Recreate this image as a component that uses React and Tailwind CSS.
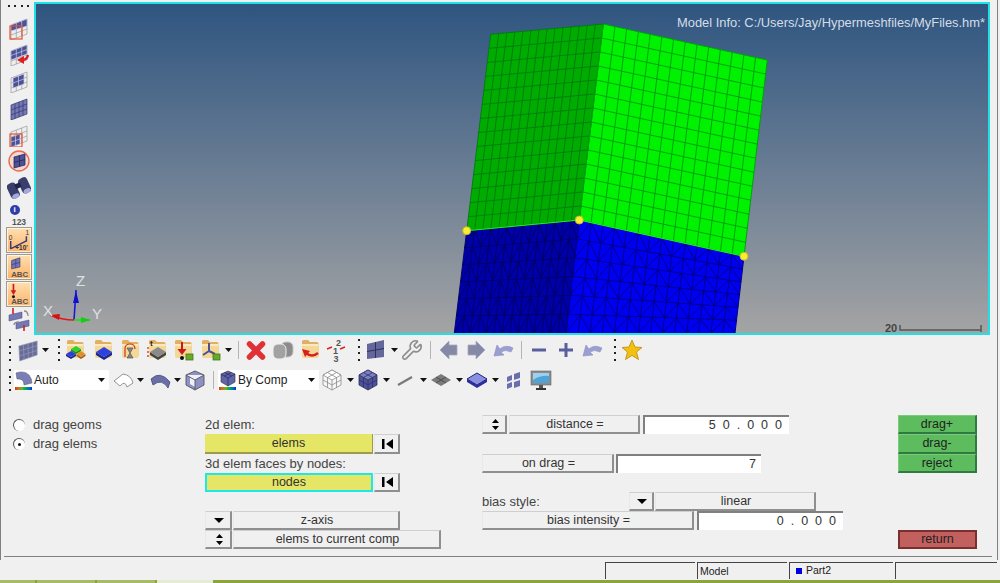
import React from 'react';
import { Wrench } from 'lucide-react';

const lerp = (a, b, t) => [a[0] + (b[0] - a[0]) * t, a[1] + (b[1] - a[1]) * t];
const pt = (q, u, v) => lerp(lerp(q[0], q[1], u), lerp(q[2], q[3], u), v);
const seg = (a, b) => `M${a[0].toFixed(1)} ${a[1].toFixed(1)}L${b[0].toFixed(1)} ${b[1].toFixed(1)}`;

const gridPath = (q, cols, rows) => {
  let d = '';
  for (let i = 0; i <= cols; i++) d += seg(pt(q, i / cols, 0), pt(q, i / cols, 1));
  for (let j = 0; j <= rows; j++) d += seg(pt(q, 0, j / rows), pt(q, 1, j / rows));
  return d;
};

const zigPath = (q, cols, rows) => {
  let d = gridPath(q, cols, rows);
  for (let i = 0; i < cols; i++) {
    for (let j = 0; j < rows; j++) {
      const [u0, u1, v0, v1] = [i / cols, (i + 1) / cols, j / rows, (j + 1) / rows];
      d += i % 2 ? seg(pt(q, u0, v0), pt(q, u1, v1)) : seg(pt(q, u1, v0), pt(q, u0, v1));
    }
  }
  return d;
};

const poly = (q) => [q[0], q[1], q[3], q[2]].map((p) => p.join(',')).join(' ');

const LT = [490.7, 34.3], CT = [603.3, 24], RT = [767.3, 60];
const LM = [466.7, 230.7], CM = [579.3, 220], RM = [744, 256.3];
const LB = [454.3, 333], CB = [566, 333], RB = [735, 333];
const faces = {
  greenL: [LT, CT, LM, CM],
  greenR: [CT, RT, CM, RM],
  blueL: [LM, CM, LB, CB],
  blueR: [CM, RM, CB, RB],
};

const Model = () => (
  <svg className="absolute inset-0 w-full h-full" viewBox="36 4 952 329">
    <polygon points={poly(faces.blueL)} fill="#0000aa" />
    <polygon points={poly(faces.blueR)} fill="#0000f0" />
    <path d={zigPath(faces.blueL, 14, 6)} stroke="#000060" strokeWidth="0.9" fill="none" />
    <path d={zigPath(faces.blueR, 14, 6)} stroke="#00008a" strokeWidth="1" fill="none" />
    <polygon points={poly(faces.greenL)} fill="#00ac00" />
    <polygon points={poly(faces.greenR)} fill="#00f200" />
    <path d={gridPath(faces.greenL, 14, 14)} stroke="#007a10" strokeWidth="0.9" fill="none" />
    <path d={gridPath(faces.greenR, 14, 14)} stroke="#00a010" strokeWidth="1" fill="none" />
    <path d={seg(LM, CM) + seg(CM, RM)} stroke="#20f020" strokeWidth="1" fill="none" />
    {[LM, CM, RM].map((p, i) => (
      <circle key={i} cx={p[0]} cy={p[1]} r="4" fill="#f6ee35" stroke="#c8b820" strokeWidth="1" />
    ))}
    <g strokeWidth="1.6" fill="none">
      <path d="M74 320L76 290" stroke="#1818e0" />
      <path d="M74 320L90 320" stroke="#18e018" />
      <path d="M74 320Q62 320 50 315" stroke="#e01818" />
    </g>
    <polygon points="76,291 79,303 73,303" fill="#1010d0" />
    <polygon points="91,320 81,317 81,323" fill="#10d010" />
    <polygon points="50,315 60,314 59,320" fill="#d81010" />
    <g fill="#dfe2e4" fontSize="15" fontFamily="Liberation Sans, sans-serif">
      <text x="76" y="286">Z</text>
      <text x="43" y="316">X</text>
      <text x="92" y="319">Y</text>
    </g>
    <text x="885" y="332" fill="#444" fontSize="11" fontWeight="bold" fontFamily="Liberation Sans, sans-serif">20</text>
    <path d="M900 325V330H981M981 325V332" stroke="#555" strokeWidth="1.5" fill="none" />
  </svg>
);

const Ico = ({ children, className = '', size = 'w-6' }) => (
  <svg viewBox="0 0 24 24" className={`${size} h-6 shrink-0 ${className}`} preserveAspectRatio="none">{children}</svg>
);

const DARK = '#4d5196';
const MID = '#7478b4';
const LIGHT = '#9a9ed0';

const block = (x, y, w, h, d, top, side) => (
  <g>
    <path d={`M${x - w} ${y}L${x} ${y + h}L${x + w} ${y}V${y + d}L${x} ${y + h + d}L${x - w} ${y + d}Z`} fill={side} />
    <path d={`M${x - w} ${y}L${x} ${y - h}L${x + w} ${y}L${x} ${y + h}Z`} fill={top} />
  </g>
);

// flag shaped surface used on the left strip
const Flag = ({ q = [[4, 9], [20, 4], [3, 23], [19, 18]], fill = DARK, cols = 3, rows = 3, stroke = '#c9cbe6' }) => (
  <g>
    <polygon points={poly(q)} fill={fill} />
    <path d={gridPath(q, cols, rows)} stroke={stroke} strokeWidth="0.7" fill="none" />
  </g>
);

const WHOLE = [[4, 9], [20, 3], [4, 24], [20, 18]];
const TOPPART = [[4, 9], [20, 3], [4, 15], [20, 10]];
const PALE = '#eeeeee';

const FolderBase = () => (
  <g>
    <path d="M4 3.5Q4 2 5.5 2H10L12 4H19Q20.5 4 20.5 5.5V18H4Z" fill="#e0b060" />
    <path d="M4 6H20.5V18Q20.5 20 19 20H5.5Q4 20 4 18Z" fill="#f4d898" />
    <path d="M4 6H20.5V8H4Z" fill="#fbeac0" />
  </g>
);

const Folder = ({ children, className = '' }) => (
  <Ico className={className}>
    <FolderBase />
    {children}
  </Ico>
);

const Undo = () => (
  <Ico>
    <path d="M22 10Q14 6 9 11L6 7L3 18L13 17L10 14Q14 11 20 14Z" fill={LIGHT} stroke="#8a8fc0" strokeWidth="0.6" />
  </Ico>
);

const Arrow = ({ flip }) => (
  <Ico>
    <path
      d={flip ? 'M21 12L12 3V7H4V17H12V21Z' : 'M3 12L12 3V7H20V17H12V21Z'}
      fill="#8589a6"
      stroke="#a6a9c0"
      strokeWidth="0.8"
    />
  </Ico>
);

const Tri = ({ className = '' }) => (
  <svg viewBox="0 0 7 4" className={`w-[7px] h-1 shrink-0 ${className}`}>
    <polygon points="0,0 7,0 3.5,4" fill="#111" />
  </svg>
);

const Grip = ({ className = '' }) => (
  <div className={`w-[3px] h-6 shrink-0 flex flex-col justify-between items-center py-px ${className}`}>
    <i className="block w-0.5 h-0.5 bg-[#222]" />
    <i className="block w-0.5 h-0.5 bg-[#222]" />
    <i className="block w-0.5 h-0.5 bg-[#222]" />
    <i className="block w-0.5 h-0.5 bg-[#222]" />
  </div>
);

const Sep = ({ className = '' }) => <div className={`w-px h-[18px] shrink-0 bg-[#b4b4b4] ${className}`} />;

const Rainbow = () => (
  <div className="absolute left-0 bottom-0 w-[17px] h-[3px] bg-gradient-to-r from-[#e02020] via-[#20c020] to-[#2020e0]" />
);

const Combo = ({ className, icon, label, textClass }) => (
  <div className={`relative h-5 bg-white flex items-center shrink-0 ${className}`}>
    <div className="absolute left-px top-0">{icon}</div>
    <span className={`text-[12px] text-[#222] ${textClass}`}>{label}</span>
    <Tri className="ml-auto mr-[4px]" />
  </div>
);

const Toolbar1 = () => (
  <div className="h-[30px] flex items-center gap-[3px] pl-[7px]">
    <Grip />
    <Ico className="ml-[4px]" size="w-5">
      <Flag q={[[1, 8], [23, 3], [2, 23], [23, 17]]} fill="#686c98" cols={4} stroke="#9a9cba" />
    </Ico>
    <Tri className="ml-px" />
    <Grip className="ml-[5px]" />
    <Folder>
      {block(13, 11, 5, 3, 2, '#30d030', '#189018')}
      {block(8, 16, 5, 3, 2, '#2a40d8', '#182890')}
      {block(18, 16, 4.5, 3, 2, '#e09030', '#a06010')}
    </Folder>
    <Folder className="ml-px">{block(13, 14, 8, 5, 3, '#2f40e0', '#1c2890')}</Folder>
    <Folder>
      <path d="M7 19V11Q7 6 12 6Q17 6 17 11" stroke="#d03020" strokeWidth="1.2" fill="none" />
      <path d="M9 10H15L12 15L15 20H9L12 15Z" fill="#888" stroke="#444" strokeWidth="0.6" />
    </Folder>
    <Folder>
      <text x="5" y="8" fontSize="8" fontWeight="bold" fill="#222" fontFamily="Liberation Sans, sans-serif">t</text>
      <path d="M3 9V21" stroke="#d02020" strokeWidth="1.2" strokeDasharray="2 2" />
      {block(13, 14, 8, 5, 3, '#8a8a8a', '#444')}
    </Folder>
    <Folder className="-ml-px">
      <path d="M11 4V12" stroke="#d01818" strokeWidth="2" />
      <polygon points="6.5,11 15.5,11 11,17" fill="#d01818" />
      <circle cx="11" cy="20" r="2" fill="#111" />
      <rect x="15" y="16" width="7" height="6" fill="#6aa82c" stroke="#3e7a14" strokeWidth="0.8" />
    </Folder>
    <Folder>
      <path d="M11 5V13L5 17M11 13L17 16" stroke={DARK} strokeWidth="2" fill="none" />
      <rect x="15" y="16" width="7" height="6" fill="#6aa82c" stroke="#3e7a14" strokeWidth="0.8" />
    </Folder>
    <Tri />
    <Sep className="ml-[3px]" />
    <Ico className="ml-[2px]">
      <path d="M5.5 6L18.5 19M18.5 6L5.5 19" stroke="#e23038" strokeWidth="5.5" strokeLinecap="round" />
    </Ico>
    <Ico>
      <rect x="10" y="4" width="12" height="15" rx="5" fill="#8c8c8c" stroke="#c4c4c4" />
      <rect x="2" y="6" width="13" height="15" rx="5" fill="#a2a2a2" stroke="#f0f0f0" />
    </Ico>
    <Folder>
      <path d="M20 15Q14 20 8 15" stroke="#d82020" strokeWidth="2.4" fill="none" />
      <polygon points="4,11 12,13 7,19" fill="#d82020" />
    </Folder>
    <Ico>
      <g fontSize="9" fontWeight="bold" fill="#555" fontFamily="Liberation Sans, sans-serif">
        <text x="11" y="8">2</text>
        <text x="8" y="15.5">1</text>
        <text x="8.5" y="23.5">3</text>
      </g>
      <path d="M7 9L2 11M15 11L20 9" stroke="#e02020" strokeWidth="1.4" />
    </Ico>
    <Grip className="ml-[5px]" />
    <Ico className="ml-px">
      <polygon points="3,6 20,2 20,19 3,21" fill="#63679a" />
      <path d="M11.5 4V20M3 13.5L20 10.5" stroke="#2c2f60" strokeWidth="1" />
    </Ico>
    <Tri />
    <div className="-ml-px w-6 h-6 shrink-0 flex items-center justify-center">
      <Wrench size={22} color="#8e8e8e" strokeWidth={1.8} />
    </div>
    <Sep className="ml-[3px]" />
    <div className="ml-[3px]"><Arrow /></div>
    <Arrow flip />
    <Undo />
    <Sep className="ml-[3px]" />
    <Ico className="ml-[2px]"><path d="M5 12H19" stroke="#5a5f9c" strokeWidth="3" /></Ico>
    <Ico><path d="M5 12H19M12 5V19" stroke="#5a5f9c" strokeWidth="3" /></Ico>
    <div className="-ml-px"><Undo /></div>
    <Grip className="ml-[6px]" />
    <Ico className="ml-px">
      <polygon
        points="12,2 15,9 22,9.5 16.5,14 18.5,21.5 12,17.5 5.5,21.5 7.5,14 2,9.5 9,9"
        fill="#f2c010"
        stroke="#b88a10"
        strokeWidth="0.8"
      />
    </Ico>
  </div>
);

const CubeGrid = ({ fill, side, stroke }) => (
  <Ico>
    <path d="M12 2L21 7V17L12 22L3 17V7Z" fill={side} stroke={stroke} strokeWidth="0.8" />
    <path d="M12 2L21 7L12 12L3 7Z" fill={fill} stroke={stroke} strokeWidth="0.8" />
    <path d="M12 12V22M7.5 4.5L16.5 9.5M16.5 4.5L7.5 9.5M7.5 9.5V19.5M16.5 9.5V19.5M3 12L12 17L21 12" stroke={stroke} strokeWidth="0.8" fill="none" />
  </Ico>
);

const Toolbar2 = () => (
  <div className="h-[30px] flex items-center gap-[3px] pl-[7px]">
    <Grip />
    <Combo
      className="w-[95px]"
      textClass="ml-[20px]"
      label="Auto"
      icon={
        <div className="relative w-[18px] h-5">
          <svg viewBox="0 0 18 17" className="w-[18px] h-[17px]">
            <path d="M1 3Q9 0 14 5Q17 9 17 13L9 15Q9 8 2 9Z" fill="#7a7eb8" stroke="#555" strokeWidth="0.5" />
          </svg>
          <Rainbow />
        </div>
      }
    />
    <Ico className="-ml-px">
      <path d="M3 13L12 6Q20 7 22 15L16 19Q14 12 9 18Z" fill="#fff" stroke="#888" strokeWidth="0.9" />
    </Ico>
    <Tri className="-ml-px" />
    <Ico className="ml-px">
      <path d="M3 11Q12 2 22 14L20 20Q14 10 5 17Z" fill="#6b6fa8" stroke="#44487a" strokeWidth="0.8" />
    </Ico>
    <Tri className="-ml-px" />
    <Ico className="-ml-px">
      <path d="M12 3L21 7V17L12 22L3 17V7Z" fill="#8d91c4" stroke="#555" strokeWidth="0.9" />
      <path d="M12 7L21 7L12 12L3 7Z M7 9L12 12V19L7 16Z" fill="#f0f0fa" />
      <path d="M3 7L12 12L21 7M12 12V22" stroke="#555" strokeWidth="0.9" fill="none" />
    </Ico>
    <Sep className="ml-[3px]" />
    <Combo
      className="ml-px w-[101px]"
      textClass="ml-[20px]"
      label="By Comp"
      icon={
        <div className="relative w-[18px] h-5">
          <svg viewBox="0 0 18 17" className="w-[18px] h-[17px]">
            <path d="M9 1L16 4V12L9 16L2 12V4Z" fill="#6064a8" stroke="#333" strokeWidth="0.6" />
            <path d="M2 4L9 8L16 4M9 8V16M5.5 2.5L12.5 6M12.5 2.5L5.5 6" stroke="#24275c" strokeWidth="0.7" fill="none" />
          </svg>
          <Rainbow />
        </div>
      }
    />
    <div className="-ml-[2px]"><CubeGrid fill="#fff" side="#f6f6f6" stroke="#8c8c8c" /></div>
    <Tri />
    <div className="-ml-px"><CubeGrid fill="#7c80bc" side="#4d5196" stroke="#2e3168" /></div>
    <Tri />
    <Ico><path d="M5 17L19 9" stroke="#7a7a7a" strokeWidth="2.2" /></Ico>
    <Tri />
    <Ico className="-ml-px">
      <path d="M12 6L22 12L12 18L2 12Z" fill="#7a7a7a" />
      <path d="M7 9L17 15M17 9L7 15" stroke="#4a4a4a" strokeWidth="0.9" />
    </Ico>
    <Tri />
    <Ico className="-ml-px">
      <path d="M2 11V14L12 20L22 14V11L12 17Z" fill="#2a30a0" />
      <path d="M12 5L22 11L12 17L2 11Z" fill="#8a90e0" stroke="#20247a" strokeWidth="1" />
    </Ico>
    <Tri />
    <Ico>
      <path d="M5 9L10 7V12L5 14ZM12 6L18 4V10L12 12ZM5 16L10 14V19L5 21ZM12 14L18 12V18L12 20Z" fill="#6a6eac" />
    </Ico>
    <Ico>
      <rect x="2" y="3" width="20" height="14" fill="#8c8c8c" stroke="#666" strokeWidth="0.6" />
      <rect x="4" y="5" width="16" height="10" fill="#4ea4d8" />
      <path d="M4 5H20V8Q12 7 4 12Z" fill="#9cd0ee" />
      <rect x="10" y="17" width="4" height="3" fill="#555" />
      <rect x="7" y="20" width="10" height="2" fill="#333" />
    </Ico>
  </div>
);

const OrangeBtn = ({ children, className = '' }) => (
  <div className={`w-[26px] h-[26px] mb-px shrink-0 border border-[#a09a90] bg-gradient-to-b from-[#ffdfb0] to-[#fbb368] ring-1 ring-inset ring-white/70 ${className}`}>
    {children}
  </div>
);

const AbcText = () => (
  <text x="4.5" y="23.5" fontSize="8.5" fontWeight="bold" fill="#555" fontFamily="Liberation Sans, sans-serif">ABC</text>
);

const LeftBar = () => (
  <div className="w-[33px] shrink-0 flex flex-col items-center pl-[3px]">
    <div className="h-[8px] mb-[5px] w-full flex items-center justify-between pl-[4px] pr-[5px]">
      <i className="w-0.5 h-0.5 bg-[#222]" />
      <i className="w-0.5 h-0.5 bg-[#222]" />
      <i className="w-0.5 h-0.5 bg-[#222]" />
      <i className="w-0.5 h-0.5 bg-[#222]" />
    </div>
    <div className="h-[26px] flex items-center">
      <Ico>
        <Flag q={WHOLE} fill={PALE} stroke="#999" />
        <Flag q={TOPPART} fill={DARK} cols={3} rows={1} />
        <rect x="3" y="10" width="12" height="13" fill="none" stroke="#e8502a" strokeWidth="1.2" />
      </Ico>
    </div>
    <div className="h-[26px] flex items-center">
      <Ico>
        <Flag q={WHOLE} fill={PALE} stroke="#999" />
        <Flag q={[[4, 9], [20, 3], [4, 18], [20, 12]]} fill={DARK} rows={2} />
        <path d="M21 13Q20 18 15 18" stroke="#e02020" strokeWidth="2.4" fill="none" />
        <polygon points="17,14 17,22 10,18" fill="#e02020" />
      </Ico>
    </div>
    <div className="h-[27px] flex items-center">
      <Ico>
        <Flag q={WHOLE} fill={PALE} stroke="#999" />
        <Flag q={[[6, 9], [17, 5], [6, 19], [17, 15]]} fill={DARK} cols={2} rows={2} />
      </Ico>
    </div>
    <div className="h-[27px] flex items-center">
      <Ico><Flag q={WHOLE} fill={MID} stroke="#34386e" cols={4} rows={3} /></Ico>
    </div>
    <div className="h-[27px] flex items-center">
      <Ico>
        <Flag q={WHOLE} fill={PALE} stroke="#999" />
        <Flag q={[[4, 14], [13, 11], [4, 24], [13, 21]]} fill={DARK} cols={2} rows={2} />
        <rect x="3" y="11" width="12" height="13" fill="none" stroke="#e8502a" strokeWidth="1.2" />
      </Ico>
    </div>
    <div className="h-[26px] flex items-center">
      <Ico>
        <circle cx="12" cy="12" r="10" fill="#f4d8d0" stroke="#e86a50" strokeWidth="1.4" />
        <Flag q={[[7, 8], [18, 5], [7, 19], [18, 16]]} fill={DARK} cols={2} rows={2} stroke="#1e2050" />
      </Ico>
    </div>
    <div className="h-[28px] flex items-center">
      <Ico>
        <g transform="rotate(-25 12 12)">
          <rect x="1" y="4" width="9.5" height="16" rx="3.5" fill="#3a3e6c" />
          <rect x="13.5" y="4" width="9.5" height="16" rx="3.5" fill="#3a3e6c" />
          <rect x="9" y="7" width="6" height="5" fill="#20224a" />
          <ellipse cx="5.7" cy="18" rx="3.8" ry="2.4" fill="#a4a8da" />
          <ellipse cx="18.2" cy="18" rx="3.8" ry="2.4" fill="#a4a8da" />
        </g>
      </Ico>
    </div>
    <div className="h-[15px] flex items-center mr-[9px]">
      <div className="w-[10px] h-[10px] rounded-full bg-[#2e3ea8] text-white text-[8px] font-bold leading-[10px] text-center">i</div>
    </div>
    <div className="h-[10px] text-[8.5px] font-bold leading-[10px] text-[#555]">123</div>
    <OrangeBtn>
      <svg viewBox="0 0 26 26" className="w-full h-full">
        <path d="M4 14V22H5L21 14M21 9V15" stroke="#35387a" strokeWidth="1.6" fill="none" />
        <g fontSize="7" fill="#333" fontFamily="Liberation Sans, sans-serif">
          <text x="2" y="13">0</text>
          <text x="20" y="8">1</text>
          <text x="9" y="24" fontWeight="bold">+10'</text>
        </g>
      </svg>
    </OrangeBtn>
    <OrangeBtn>
      <svg viewBox="0 0 26 26" className="w-full h-full">
        <Flag q={[[5, 6], [14, 3], [5, 15], [14, 13]]} fill={MID} cols={2} rows={2} stroke="#34386e" />
        <AbcText />
      </svg>
    </OrangeBtn>
    <OrangeBtn>
      <svg viewBox="0 0 26 26" className="w-full h-full">
        <path d="M7 2V11" stroke="#d01818" strokeWidth="1.8" />
        <polygon points="4,9 10,9 7,14" fill="#d01818" />
        <circle cx="7" cy="16" r="1.6" fill="#111" />
        <AbcText />
      </svg>
    </OrangeBtn>
    <div className="h-[21px] flex items-center">
      <Ico>
        <path d="M2 8L15 5V11L2 14Z M9 16L22 13V19L9 22Z" fill={MID} stroke="#44487a" strokeWidth="0.5" />
        <path d="M6 1V7M17 18V24" stroke="#d82020" strokeWidth="1.6" />
        <path d="M17 4Q21 4 21 9M12 15Q7 15 7 18" stroke="#8c8c8c" strokeWidth="1.3" fill="none" />
      </Ico>
    </div>
  </div>
);

const bevel = 'border-t border-l border-b-2 border-r-2 border-t-[#cfcfcf] border-l-[#e8e8e8] border-b-[#8f8f8f] border-r-[#8f8f8f]';

const Btn = ({ className = '', children }) => (
  <div className={`h-full shrink-0 flex items-center justify-center pl-[2px] text-[12.5px] text-[#333] ${bevel} ${className}`}>
    {children}
  </div>
);

const Entry = ({ className = '', children, textClass = 'tracking-[7px]' }) => (
  <div className={`h-full shrink-0 flex items-center justify-end bg-white border-t-2 border-l-2 border-t-[#808080] border-l-[#808080] text-[12.5px] text-[#333] ${textClass} ${className}`}>
    {children}
  </div>
);

const DownBtn = ({ className = '' }) => (
  <Btn className={className}>
    <svg viewBox="0 0 10 5" className="w-[10px] h-[5px]"><polygon points="0,0 10,0 5,5" fill="#000" /></svg>
  </Btn>
);

const UpDownBtn = ({ className = '' }) => (
  <Btn className={className}>
    <svg viewBox="0 0 7 11" className="w-[7px] h-[11px]"><polygon points="3.5,0 7,4 0,4" fill="#000" /><polygon points="0,7 7,7 3.5,11" fill="#000" /></svg>
  </Btn>
);

const SkipBtn = ({ className = '' }) => (
  <Btn className={`w-[26px] ${className}`}>
    <svg viewBox="0 0 11 10" className="w-[11px] h-[10px]"><rect x="0" y="0" width="2.5" height="10" fill="#000" /><polygon points="11,0 11,10 4,5" fill="#000" /></svg>
  </Btn>
);

const Radio = ({ label, checked, className = '' }) => (
  <div className={`flex items-center text-[13px] text-[#444] ${className}`}>
    <div className="w-3 h-3 rounded-full bg-white border-t border-l border-t-[#555] border-l-[#555] flex items-center justify-center">
      {checked && <i className="block w-[3px] h-[3px] rounded-full bg-[#111]" />}
    </div>
    <span className="ml-2">{label}</span>
  </div>
);

const Action = ({ children, className = '' }) => (
  <div className={`flex items-center justify-center text-[12.5px] text-[#222] bg-[#5cbc5e] border-b-2 border-r-2 border-t border-l border-b-[#2f7a42] border-r-[#2f7a42] border-t-[#78cc7a] border-l-[#78cc7a] ${className}`}>
    {children}
  </div>
);

const rowsCls = 'grid grid-rows-[19px_20px_19px_19px_19px_19px_19px]';

const Panel = () => (
  <div className="flex pt-5 h-[154px]">
    <div className={`w-[204px] shrink-0 pl-3 ${rowsCls}`}>
      <Radio label="drag geoms" />
      <Radio label="drag elems" checked />
    </div>
    <div className={`w-[277px] shrink-0 ${rowsCls}`}>
      <div className="row-start-1 text-[13px] text-[#444] leading-[19px]">2d elem:</div>
      <div className="row-start-2 flex">
        <div className="w-[168px] flex items-center justify-center bg-[#e6e666] text-[12.5px] text-[#333] border-b-2 border-r border-b-[#9a9a50] border-r-[#9a9a50]">elems</div>
        <SkipBtn className="ml-px" />
      </div>
      <div className="row-start-3 text-[13px] text-[#444] leading-[19px]">3d elem faces by nodes:</div>
      <div className="row-start-4 flex">
        <div className="w-[168px] flex items-center justify-center bg-[#e6e666] text-[12.5px] text-[#333] border-2 border-[#1ce8e8]">nodes</div>
        <SkipBtn className="ml-px" />
      </div>
      <div className="row-start-6 flex">
        <DownBtn className="w-[27px]" />
        <Btn className="ml-px w-[167px]">z-axis</Btn>
      </div>
      <div className="row-start-7 flex">
        <UpDownBtn className="w-[27px]" />
        <Btn className="ml-px w-[208px]">elems to current comp</Btn>
      </div>
    </div>
    <div className={`w-[416px] shrink-0 ${rowsCls}`}>
      <div className="row-start-1 flex">
        <UpDownBtn className="w-[25px]" />
        <Btn className="ml-[2px] w-[131px]">distance =</Btn>
        <Entry className="ml-[3px] w-[146px]">50.000</Entry>
      </div>
      <div className="row-start-3 flex">
        <Btn className="w-[132px]">on drag =</Btn>
        <Entry className="ml-[2px] w-[145px] pr-[5px]" textClass="">7</Entry>
      </div>
      <div className="row-start-5 flex">
        <div className="w-[147px] text-[13px] text-[#444] leading-[19px]">bias style:</div>
        <DownBtn className="w-[25px]" />
        <Btn className="ml-px w-[161px]">linear</Btn>
      </div>
      <div className="row-start-6 flex">
        <Btn className="w-[212px]">bias intensity =</Btn>
        <Entry className="ml-[3px] w-[146px]">0.000</Entry>
      </div>
    </div>
    <div className={`w-[79px] shrink-0 ${rowsCls}`}>
      <Action className="row-start-1">drag+</Action>
      <Action className="row-start-2">drag-</Action>
      <Action className="row-start-3">reject</Action>
      <div className="row-start-7 flex items-center justify-center text-[12.5px] text-[#222] bg-[#c25f5f] border-2 border-[#7c2f2f]">return</div>
    </div>
  </div>
);

const Status = () => (
  <div className="flex h-[17px] mt-[2px] ml-[605px] gap-[2px] text-[10.5px] text-[#222]">
    <div className="w-[90px] border-t border-l border-[#444]" />
    <div className="w-[90px] border-t border-l border-[#444] pl-[2px] leading-[17px]">Model</div>
    <div className="w-[104px] border-t border-l border-[#444] flex items-center pl-[6px]">
      <i className="block w-[6px] h-[6px] bg-[#0000e0] mr-[4px]" />
      Part2
    </div>
    <div className="w-[102px] border-t border-l border-[#444]" />
  </div>
);

const Taskbar = () => (
  <div className="h-[3px] mt-px flex bg-[#8aa53e] gap-[2px]">
    <div className="w-[35px] bg-[#a6bc68]" />
    <div className="w-[58px] bg-[#a6bc68]" />
    <div className="w-[58px] bg-[#a6bc68]" />
    <div className="w-[56px] bg-[#e6ebd6]" />
  </div>
);

export default function App() {
  return (
    <div className="w-[1000px] h-[583px] bg-[#f0f0f0] overflow-hidden font-['Liberation_Sans',sans-serif]">
      <div className="w-[998px] h-[560px] border-l border-r border-[#808080] flex flex-col">
        <div className="flex h-[335px] pt-[2px]">
          <LeftBar />
          <div className="relative w-[956px] h-[333px] border-2 border-[#1fe0e6] bg-gradient-to-b from-[#2e5580] to-[#a4a4a4]">
            <Model />
            <div className="absolute right-[3px] top-[9px] text-[12.9px] text-[#d4dde6]">
              Model Info: C:/Users/Jay/Hypermeshfiles/MyFiles.hm*
            </div>
          </div>
        </div>
        <Toolbar1 />
        <Toolbar2 />
        <Panel />
        <div className="ml-[3px] mt-[7px] w-[988px] h-px bg-[#808080]" />
      </div>
      <Status />
      <Taskbar />
    </div>
  );
}
